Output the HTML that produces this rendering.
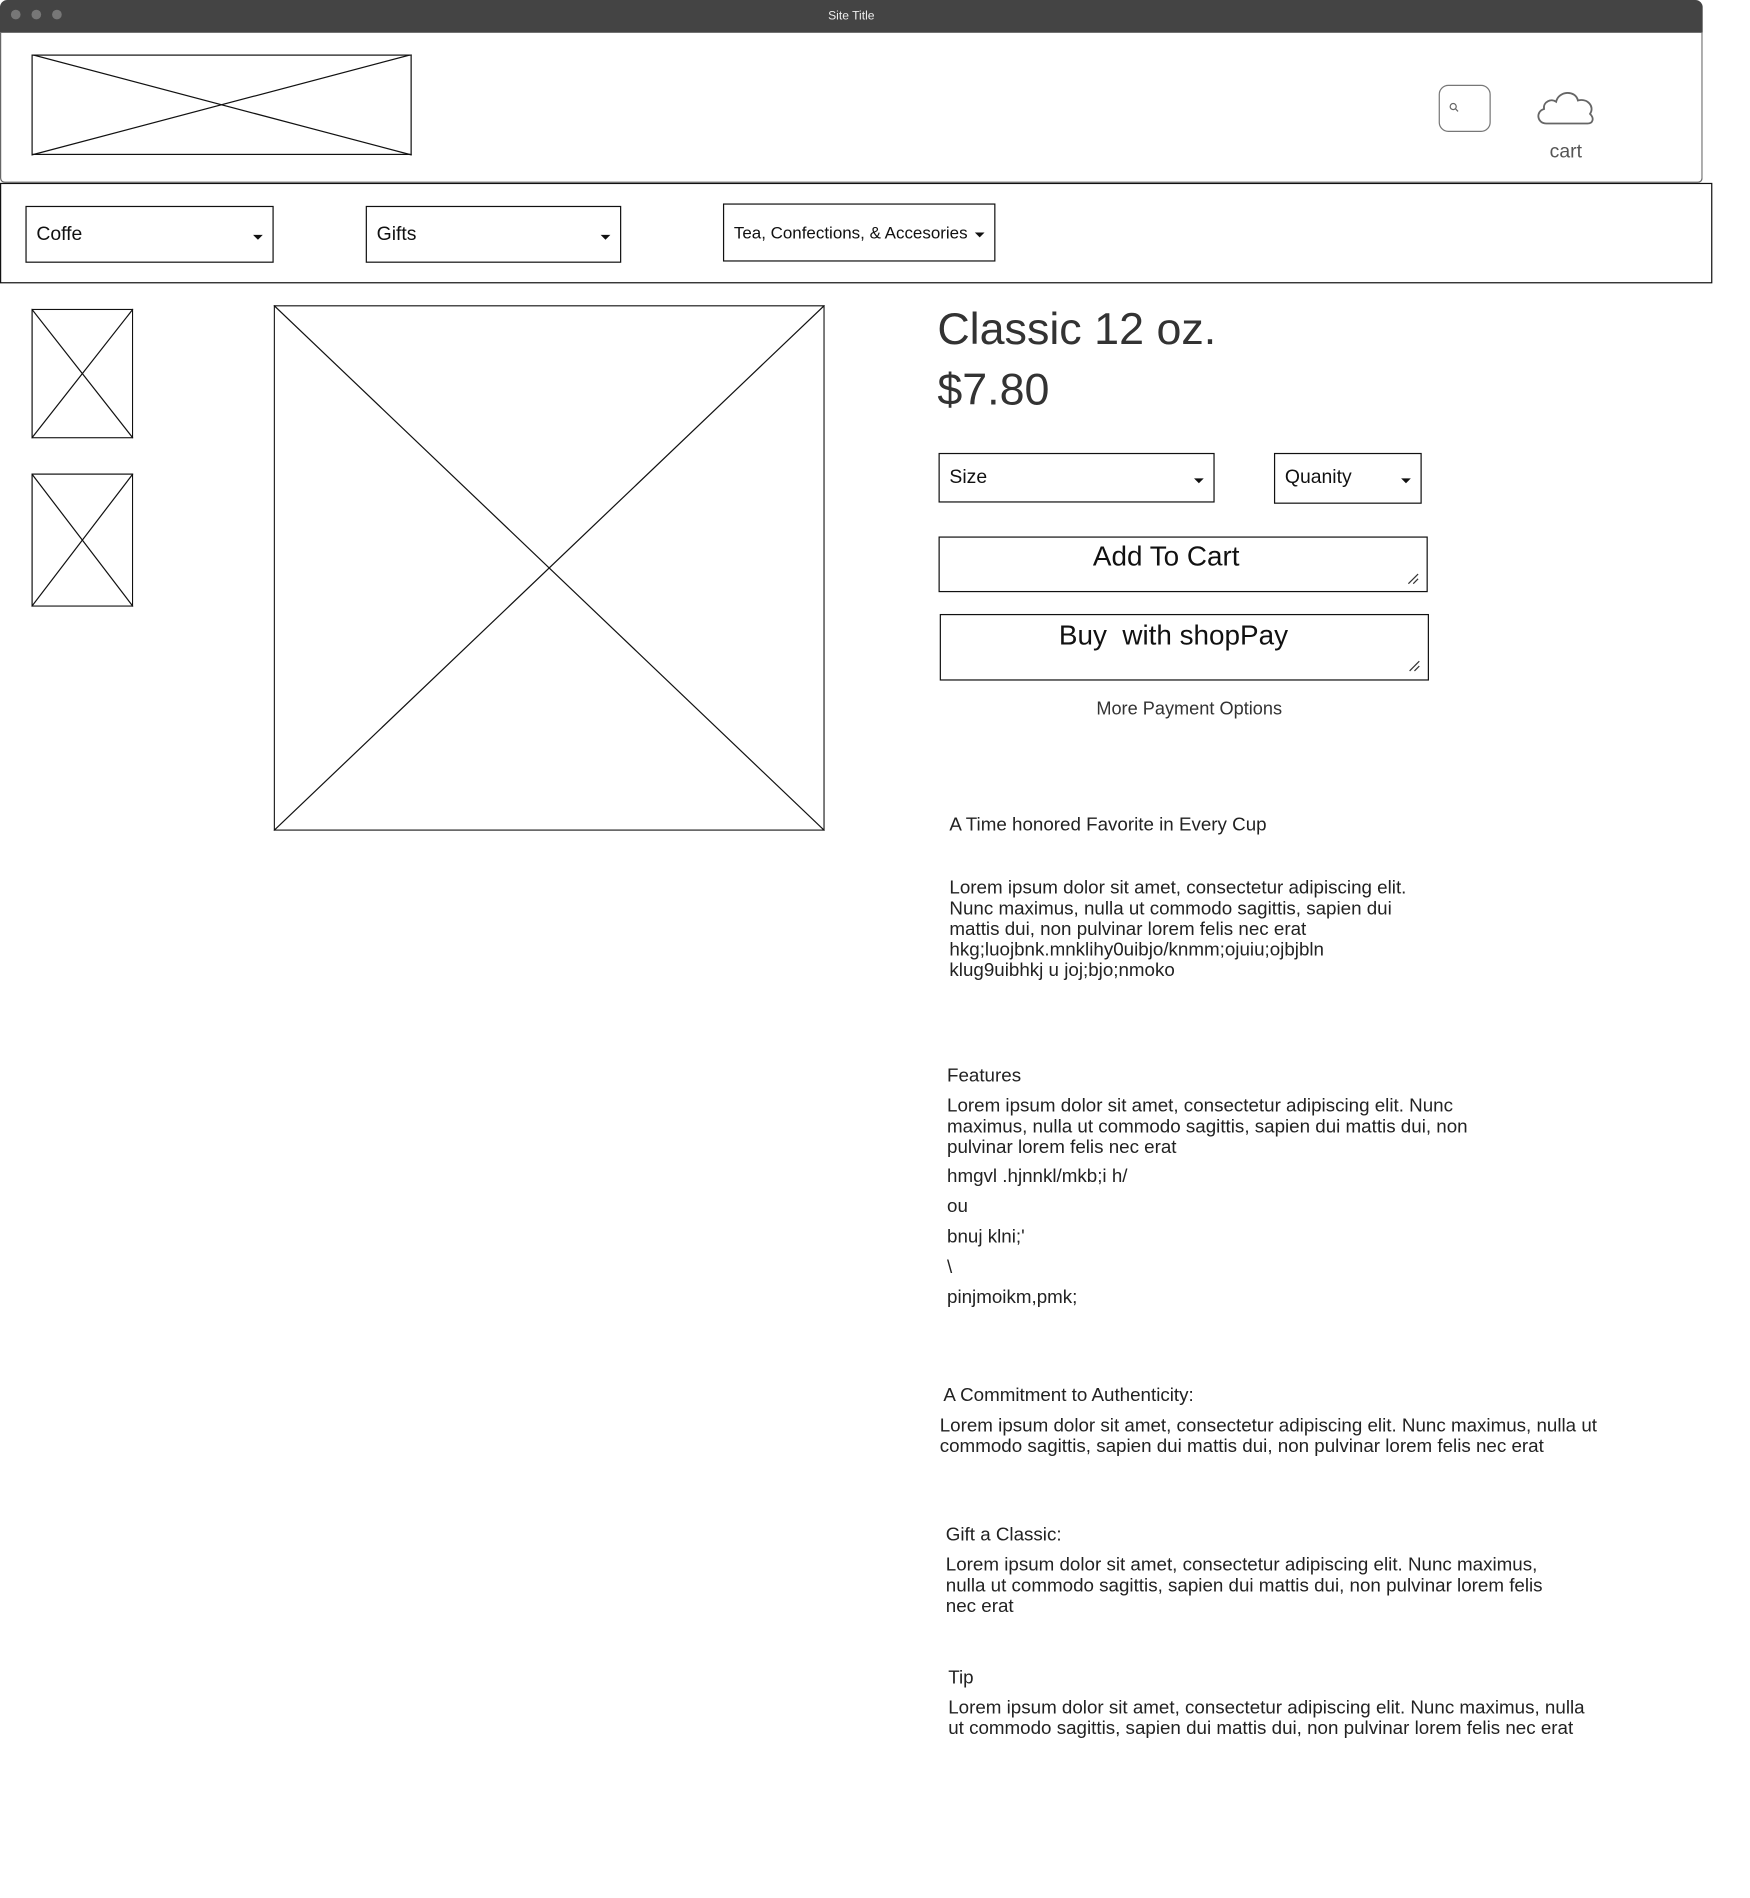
<!DOCTYPE html>
<html><head><meta charset="utf-8"><style>
html,body{margin:0;padding:0;background:#fff;}
body{width:1750px;height:1897px;overflow:hidden;position:relative;}
#w{position:absolute;left:0;top:0;width:1445px;height:1567px;transform:scale(1.211);transform-origin:0 0;font-family:"Liberation Sans",sans-serif;color:#222;}
.a{position:absolute;}
.box{position:absolute;border:1px solid #111;box-sizing:border-box;}
.t{position:absolute;white-space:nowrap;}
.dd{position:absolute;border:1px solid #111;box-sizing:border-box;font-size:16px;color:#111;}
.dd span{position:absolute;left:8px;top:50%;transform:translateY(-50%);}
.dd i{position:absolute;right:8px;top:50%;width:0;height:0;border-left:4px solid transparent;border-right:4px solid transparent;border-top:4px solid #111;margin-top:0;}
.p{font-size:15.5px;line-height:17px;color:#222;}
.h{font-size:15.5px;color:#222;}
</style></head><body><div id="w">
<div class="a" style="left:0;top:0;width:1406px;height:27px;background:#444;border-radius:6px 6px 0 0;"></div>
<div class="a" style="left:9px;top:8px;width:8px;height:8px;border-radius:50%;background:#777"></div>
<div class="a" style="left:26px;top:8px;width:8px;height:8px;border-radius:50%;background:#777"></div>
<div class="a" style="left:43px;top:8px;width:8px;height:8px;border-radius:50%;background:#777"></div>
<div class="t" style="left:0;width:1406px;text-align:center;top:8px;font-size:10px;color:#eee;">Site Title</div>
<div class="a" style="left:0;top:27px;width:1406px;height:124px;border:1px solid #666;border-top:none;box-sizing:border-box;border-radius:0 0 4px 4px"></div>
<svg class="a" style="left:26px;top:45px" width="315" height="84"><rect x="0.5" y="0.5" width="313" height="82" fill="none" stroke="#111"/><line x1="0" y1="0" x2="314" y2="83" stroke="#111"/><line x1="0" y1="83" x2="314" y2="0" stroke="#111"/></svg>
<div class="a" style="left:1188px;top:70px;width:43px;height:39px;border:1px solid #777;border-radius:8px;box-sizing:border-box"></div>
<svg class="a" style="left:1196px;top:84px" width="10" height="10"><circle cx="4" cy="4" r="2.5" fill="none" stroke="#666"/><line x1="6" y1="6" x2="8" y2="8" stroke="#666"/></svg>
<svg class="a" style="left:1267px;top:70px" width="52" height="36"><path d="M10 32 C2 32 1 22 8 20 C7 14 14 11 18 14 C20 5 34 4 36 13 C44 11 50 18 46 24 C50 28 48 32 44 32 Z" fill="none" stroke="#666" stroke-width="1.5"/></svg>
<div class="t" style="left:1263px;width:60px;text-align:center;top:117px;font-size:16px;color:#555;">cart</div>
<div class="a" style="left:0;top:151px;width:1414px;height:83px;border:1px solid #111;box-sizing:border-box"></div>
<div class="dd" style="left:21px;top:170px;width:205px;height:47px"><span>Coffe</span><i></i></div>
<div class="dd" style="left:302px;top:170px;width:211px;height:47px"><span>Gifts</span><i></i></div>
<div class="dd" style="left:597px;top:168px;width:225px;height:48px;font-size:14px"><span style="left:8px">Tea, Confections, &amp; Accesories</span><i style="right:8px"></i></div>
<svg class="a" style="left:26px;top:255px" width="84" height="107"><rect x="0.5" y="0.5" width="83" height="106" fill="none" stroke="#111"/><line x1="0" y1="0" x2="84" y2="107" stroke="#111"/><line x1="0" y1="107" x2="84" y2="0" stroke="#111"/></svg>
<svg class="a" style="left:26px;top:391px" width="84" height="110"><rect x="0.5" y="0.5" width="83" height="109" fill="none" stroke="#111"/><line x1="0" y1="0" x2="84" y2="110" stroke="#111"/><line x1="0" y1="110" x2="84" y2="0" stroke="#111"/></svg>
<svg class="a" style="left:226px;top:252px" width="455" height="434"><rect x="0.5" y="0.5" width="454" height="433" fill="none" stroke="#111"/><line x1="0" y1="0" x2="455" y2="434" stroke="#111"/><line x1="0" y1="434" x2="455" y2="0" stroke="#111"/></svg>
<div class="t" style="left:774px;top:251px;font-size:37px;color:#333;">Classic 12 oz.</div>
<div class="t" style="left:774px;top:301px;font-size:37px;color:#333;">$7.80</div>
<div class="dd" style="left:775px;top:374px;width:228px;height:41px"><span>Size</span><i></i></div>
<div class="dd" style="left:1052px;top:374px;width:122px;height:42px"><span>Quanity</span><i></i></div>
<div class="box" style="left:775px;top:443px;width:404px;height:46px"></div>
<div class="t" style="left:775px;width:376px;text-align:center;top:446px;font-size:23px;color:#111">Add To Cart</div>
<div class="box" style="left:776px;top:507px;width:404px;height:55px"></div>
<div class="t" style="left:776px;width:386px;text-align:center;top:511px;font-size:23px;color:#111">Buy&nbsp; with shopPay</div>
<svg class="a" style="left:1162px;top:473px" width="10" height="10"><line x1="1" y1="9" x2="9" y2="1" stroke="#333"/><line x1="5" y1="9" x2="9" y2="5" stroke="#333"/></svg>
<svg class="a" style="left:1163px;top:545px" width="10" height="10"><line x1="1" y1="9" x2="9" y2="1" stroke="#333"/><line x1="5" y1="9" x2="9" y2="5" stroke="#333"/></svg>
<div class="t" style="left:882px;width:200px;text-align:center;top:577px;font-size:15px;color:#333">More Payment Options</div>
<div class="t h" style="left:784px;top:673px">A Time honored Favorite in Every Cup</div>
<div class="t p" style="left:784px;top:725px">Lorem ipsum dolor sit amet, consectetur adipiscing elit.<br>Nunc maximus, nulla ut commodo sagittis, sapien dui<br>mattis dui, non pulvinar lorem felis nec erat<br>hkg;luojbnk.mnklihy0uibjo/knmm;ojuiu;ojbjbln<br>klug9uibhkj u joj;bjo;nmoko</div>
<div class="t h" style="left:782px;top:880px">Features</div>
<div class="t p" style="left:782px;top:905px">Lorem ipsum dolor sit amet, consectetur adipiscing elit. Nunc<br>maximus, nulla ut commodo sagittis, sapien dui mattis dui, non<br>pulvinar lorem felis nec erat</div>
<div class="t h" style="left:782px;top:963px">hmgvl .hjnnkl/mkb;i h/</div>
<div class="t h" style="left:782px;top:988px">ou</div>
<div class="t h" style="left:782px;top:1013px">bnuj klni;'</div>
<div class="t h" style="left:782px;top:1038px">\</div>
<div class="t h" style="left:782px;top:1063px">pinjmoikm,pmk;</div>
<div class="t h" style="left:779px;top:1144px">A Commitment to Authenticity:</div>
<div class="t p" style="left:776px;top:1169px">Lorem ipsum dolor sit amet, consectetur adipiscing elit. Nunc maximus, nulla ut<br>commodo sagittis, sapien dui mattis dui, non pulvinar lorem felis nec erat</div>
<div class="t h" style="left:781px;top:1259px">Gift a Classic:</div>
<div class="t p" style="left:781px;top:1284px">Lorem ipsum dolor sit amet, consectetur adipiscing elit. Nunc maximus,<br>nulla ut commodo sagittis, sapien dui mattis dui, non pulvinar lorem felis<br>nec erat</div>
<div class="t h" style="left:783px;top:1377px">Tip</div>
<div class="t p" style="left:783px;top:1402px">Lorem ipsum dolor sit amet, consectetur adipiscing elit. Nunc maximus, nulla<br>ut commodo sagittis, sapien dui mattis dui, non pulvinar lorem felis nec erat</div>
</div></body></html>
